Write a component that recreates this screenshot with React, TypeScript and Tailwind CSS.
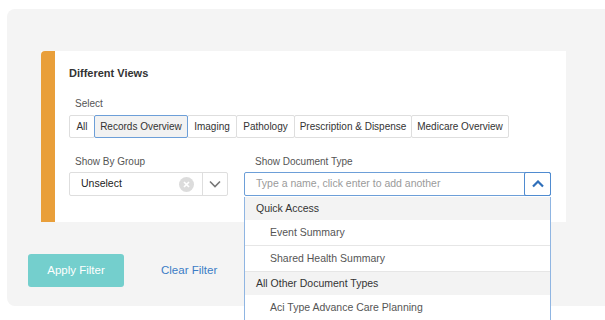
import React from 'react';

const views = [
    { label: 'All', w: 'w-[26px]' },
    { label: 'Records Overview', w: 'w-[94px]', active: true },
    { label: 'Imaging', w: 'w-[50px]' },
    { label: 'Pathology', w: 'w-[59px]' },
    { label: 'Prescription & Dispense', w: 'w-[118px]' },
    { label: 'Medicare Overview', w: 'w-[98px]' },
];

const options = [
    { label: 'Quick Access', header: true },
    { label: 'Event Summary' },
    { label: 'Shared Health Summary' },
    { label: 'All Other Document Types', header: true },
    { label: 'Aci Type Advance Care Planning' },
];

const ChevronDown = ({ className }: { className?: string }) => (
    <svg width="12" height="8" viewBox="0 0 12 8" className={className}>
        <path d="M1 1.5 L6 6.5 L11 1.5" fill="none" stroke="currentColor" strokeWidth="1.6" />
    </svg>
);

const ChevronUp = ({ className }: { className?: string }) => (
    <svg width="12" height="8" viewBox="0 0 12 8" className={className}>
        <path d="M1 6.5 L6 1.5 L11 6.5" fill="none" stroke="currentColor" strokeWidth="2.2" />
    </svg>
);

const App = () => {
    return (
        <div className="w-[605px] h-[320px] overflow-hidden bg-white font-['Liberation_Sans',Arial,sans-serif]">
            <div className="ml-[7px] mt-[9px] w-[640px] h-[297px] bg-[#f4f4f4] rounded-[8px] pt-[42px] pl-[34px]">
                {/* Filter card */}
                <div className="flex w-[525px] h-[171px] bg-white">
                    <div className="w-[14px] bg-[#e99f3a] rounded-tl-[4px]" />
                    <div className="pl-[14px] pt-[15px]">
                        <h3 className="text-[11px] leading-[14px] font-bold text-[#333]">Different Views</h3>

                        <div className="mt-[17px] ml-[6px] text-[10px] leading-[13px] text-[#555]">Select</div>
                        <div className="mt-[5px] ml-px flex">
                            {views.map((v) => (
                                <button
                                    key={v.label}
                                    className={
                                        v.active
                                            ? `${v.w} -ml-px h-[23px] relative z-10 border border-[#6d9fd8] bg-[#f2f2f2] text-[10px] text-[#333] rounded-[2px]`
                                            : `${v.w} -ml-px h-[23px] border border-[#dedede] bg-white text-[10px] text-[#333] rounded-[2px]`
                                    }
                                >
                                    {v.label}
                                </button>
                            ))}
                        </div>

                        <div className="mt-[17px] flex gap-[16px]">
                            <div>
                                <div className="ml-[6px] text-[10px] leading-[13px] text-[#555]">Show By Group</div>
                                <div className="mt-[4px] flex items-center w-[159px] h-[24px] border border-[#dedede] rounded-[2px]">
                                    <span className="flex-1 pl-[11px] text-[10.5px] text-[#222]">Unselect</span>
                                    <span className="w-[15px] h-[15px] rounded-full bg-[#dcdcdc] flex items-center justify-center mr-[8px]">
                                        <svg width="7" height="7" viewBox="0 0 7 7">
                                            <path d="M1 1 L6 6 M6 1 L1 6" stroke="white" strokeWidth="1.7" />
                                        </svg>
                                    </span>
                                    <span className="h-full w-[25px] border-l border-[#dedede] flex items-center justify-center text-[#777]">
                                        <ChevronDown />
                                    </span>
                                </div>
                            </div>

                            <div>
                                <div className="ml-[11px] text-[10px] leading-[13px] text-[#555]">Show Document Type</div>
                                <div className="relative mt-[4px]">
                                    <div className="flex items-center w-[307px] h-[24px] border border-[#6d9fd8] rounded-[2px]">
                                        <span className="flex-1 pl-[11px] text-[10.5px] text-[#9a9a9a]">
                                            Type a name, click enter to add another
                                        </span>
                                        <span className="w-[27px] h-[24px] -mr-px border border-[#4f8bd0] rounded-[2px] flex items-center justify-center text-[#2f6fba]">
                                            <ChevronUp />
                                        </span>
                                    </div>

                                    {/* dropdown menu */}
                                    <div className="absolute left-0 top-[25px] z-20 w-[307px] bg-white border-x border-[#8fb5e2]">
                                        {options.map((o) =>
                                            o.header ? (
                                                <div
                                                    key={o.label}
                                                    className="h-[23px] bg-[#f3f3f3] flex items-center pl-[11px] text-[10.5px] text-[#333]"
                                                >
                                                    {o.label}
                                                </div>
                                            ) : (
                                                <div
                                                    key={o.label}
                                                    className="h-[26px] border-b border-[#e6e6e6] flex items-center pl-[25px] text-[10.5px] text-[#555]"
                                                >
                                                    {o.label}
                                                </div>
                                            )
                                        )}
                                    </div>
                                </div>
                            </div>
                        </div>
                    </div>
                </div>

                {/* Actions */}
                <div className="mt-[32px] -ml-[13px] flex items-center">
                    <button className="w-[96px] h-[33px] bg-[#74cfcd] rounded-[3px] text-white text-[11.5px]">
                        Apply Filter
                    </button>
                    <button className="ml-[37px] text-[11.5px] text-[#3b7cc6]">Clear Filter</button>
                </div>
            </div>
        </div>
    );
};

export default App;
